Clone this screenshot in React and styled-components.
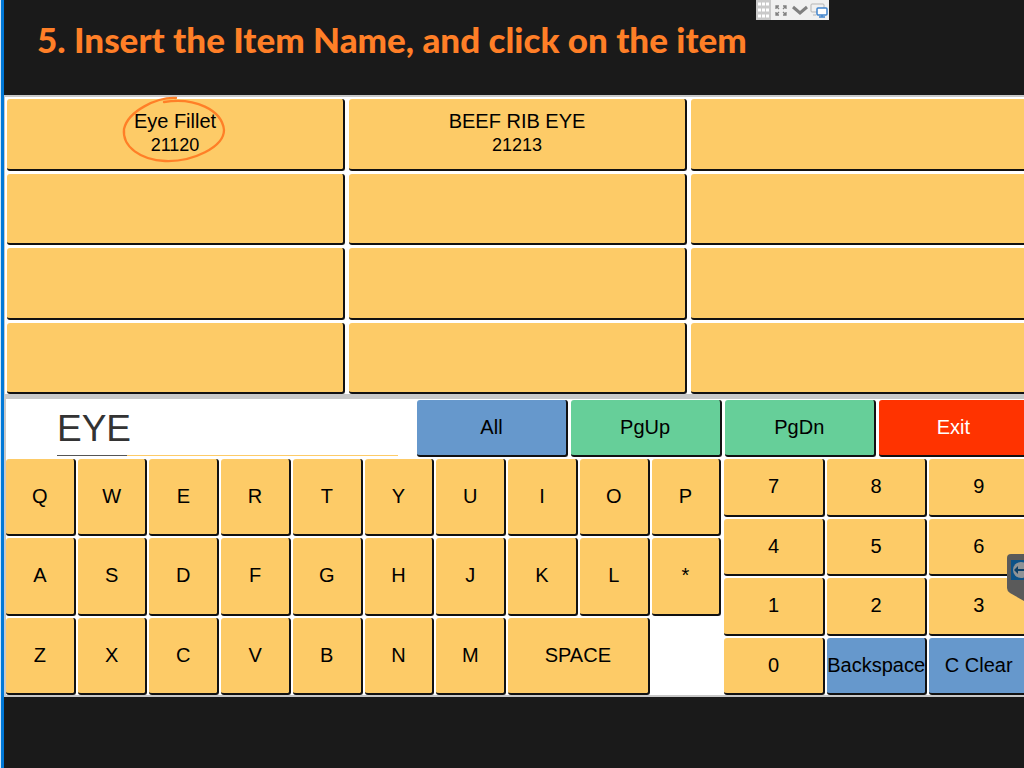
import styled, { createGlobalStyle } from "styled-components";

const GlobalStyle = createGlobalStyle`
  * {
    box-sizing: border-box;
  }
  body {
    margin: 0;
    background: #1a1a1a;
    overflow-x: hidden;
  }
`;

const Page = styled.div`
  min-height: 100vh;
  display: flex;
  flex-direction: column;
  margin-left: 1px;
  border-left: 3px solid #0078d7;
  box-shadow: -1px 0 #cfe6f8;
  overflow: hidden;
  font-family: "Liberation Sans", Arial, sans-serif;
`;

const Header = styled.header`
  display: flex;
  align-items: flex-start;
  height: 95px;
  padding-left: 33px;
`;

const Title = styled.h1`
  margin: 0;
  padding-top: 19px;
  color: #ff7f27;
  font-family: Lato, sans-serif;
  font-size: 35px;
  line-height: 40px;
  font-weight: 900;
  white-space: nowrap;
`;

const Toolbar = styled.div`
  display: flex;
  flex-shrink: 0;
  width: 73px;
  height: 20px;
  margin-left: auto;
  margin-right: 195px;
  background: #f0f0f0;
`;

const Screen = styled.main`
  position: relative;
  padding: 2px 0 2px 1px;
  background: #c8c8c8;
`;

const Results = styled.section`
  display: grid;
  grid-template-columns: repeat(3, 1fr);
  grid-template-rows: repeat(4, 1fr);
  gap: 3px 4px;
  height: 297px;
  margin-right: -6px;
  padding: 2px 1px 0 2px;
  background: #fff;
`;

const Key = styled.button`
  display: flex;
  flex-direction: column;
  align-items: center;
  justify-content: center;
  min-width: 0;
  padding: 0 0 1px;
  border: 0 solid #111;
  border-width: 0 2px 2px 0;
  border-radius: 3px;
  grid-column: span ${(props) => props.$span || 1};
  background: ${(props) => props.$bg || "#fdcb67"};
  color: ${(props) => props.$color || "#000"};
  font-family: inherit;
  font-size: 20px;
  line-height: 24px;
  white-space: nowrap;
`;

const Code = styled.span`
  font-size: 18px;
`;

const Marked = styled.span`
  position: relative;
  display: flex;
  flex-direction: column;
  align-items: center;
`;

const Circle = styled.svg`
  position: absolute;
  left: 50%;
  top: 50%;
  transform: translate(-50%, -50%);
  width: 104px;
  height: 72px;
  overflow: visible;
`;

const Actions = styled.form`
  display: grid;
  grid-template-columns: 408fr 150fr 151fr 151fr 151fr;
  gap: 3px;
  height: 60px;
  margin-top: 5px;
  margin-left: 1px;
  margin-right: -6px;
  padding: 1px 0 2px;
  background: #fff;
`;

const Search = styled.input`
  min-width: 0;
  margin: 0 16px 1px 51px;
  padding: 2px 0 0;
  border: 0;
  outline: 0;
  background: linear-gradient(90deg, #555 70px, #fdcb67 70px) bottom / 100% 1px no-repeat #fff;
  color: #333;
  font-family: inherit;
  font-size: 37px;
`;

const Pads = styled.section`
  display: grid;
  grid-template-columns: 716fr 306fr;
  gap: 3px;
  height: 236px;
  margin-left: 1px;
  margin-right: -6px;
  background: #fff;
`;

const Letters = styled.div`
  display: grid;
  grid-template-columns: repeat(10, 1fr);
  grid-template-rows: repeat(3, 1fr);
  gap: 2px;
`;

const Numbers = styled.div`
  display: grid;
  grid-template-columns: repeat(3, 1fr);
  grid-template-rows: repeat(4, 1fr);
  gap: 2px;
`;

const Bubble = styled.svg`
  position: absolute;
  right: 0;
  top: 459px;
  width: 17px;
  height: 48px;
`;

const blue = "#6698cc";
const green = "#66cf99";
const letters = [..."QWERTYUIOPASDFGHJKL*ZXCVBNM"];
const digits = [..."7894561230"];

function App() {
  return (
    <>
      <GlobalStyle />
      <Page>
        <Header>
          <Title>5. Insert the Item Name, and click on the item</Title>
          <Toolbar>
            <svg width="73" height="20" viewBox="0 0 73 20" fill="none">
              <path d="M0 0H15V20H0Z" fill="#c9c9c9" />
              <path
                d="M2 4H13M2 10H13M2 16H13"
                stroke="#fff"
                strokeWidth="3"
                strokeDasharray="3 1"
              />
              <path
                d="M23 9L20 6M20 9V6H23M27 9L30 6M27 6H30V9M23 12L20 15M20 12V15H23M27 12L30 15M27 15H30V12"
                stroke="#808080"
                strokeWidth="1.3"
              />
              <path d="M37 7L44 13L51 7" stroke="#808080" strokeWidth="3" />
              <rect x="55" y="4" width="13" height="8" rx="1" stroke="#b5b5b5" />
              <path d="M57 15H60" stroke="#b5b5b5" />
              <rect x="61" y="8" width="10" height="7" rx="1" fill="#fff" stroke="#3f83cc" strokeWidth="1.5" />
              <path d="M66 15V17M63 17H69" stroke="#3f83cc" strokeWidth="1.5" />
            </svg>
          </Toolbar>
        </Header>
        <Screen>
          <Results>
            <Key>
              <Marked>
                Eye Fillet
                <Code>21120</Code>
                <Circle viewBox="0 0 104 72" fill="none" stroke="#ff7f27" strokeWidth="2.3" strokeLinecap="round">
                  <path d="M53 1C34 0 5 14 1 32C-1 50 18 63 42 64C70 65 101 50 101 33C99 13 72 0 41 5" />
                </Circle>
              </Marked>
            </Key>
            <Key>
              BEEF RIB EYE
              <Code>21213</Code>
            </Key>
            {Array.from({ length: 10 }, (_, i) => (
              <Key key={i} aria-label="Empty item" />
            ))}
          </Results>
          <Actions onSubmit={(e) => e.preventDefault()}>
            <Search aria-label="Item name" defaultValue="EYE" />
            <Key type="button" $bg={blue}>All</Key>
            <Key type="button" $bg={green}>PgUp</Key>
            <Key type="button" $bg={green}>PgDn</Key>
            <Key type="button" $bg="#ff3300" $color="#fff">Exit</Key>
          </Actions>
          <Pads>
            <Letters>
              {letters.map((letter) => (
                <Key key={letter}>{letter}</Key>
              ))}
              <Key $span={2}>SPACE</Key>
            </Letters>
            <Numbers>
              {digits.map((digit) => (
                <Key key={digit}>{digit}</Key>
              ))}
              <Key $bg={blue}>Backspace</Key>
              <Key $bg={blue}>C Clear</Key>
            </Numbers>
          </Pads>
          <Bubble viewBox="0 0 17 48">
            <path d="M17 0H4Q0 0 0 4V34Q0 37 3 39L17 47Z" fill="#5a5a5a" />
            <path d="M4 6H17V26H4Z" fill="#0d5287" />
            <circle cx="14" cy="16" r="8" fill="#8f9396" />
            <path d="M7 16L11 12V15H17V17H11V20Z" fill="#0d3f66" />
          </Bubble>
        </Screen>
      </Page>
    </>
  );
}

export default App;
